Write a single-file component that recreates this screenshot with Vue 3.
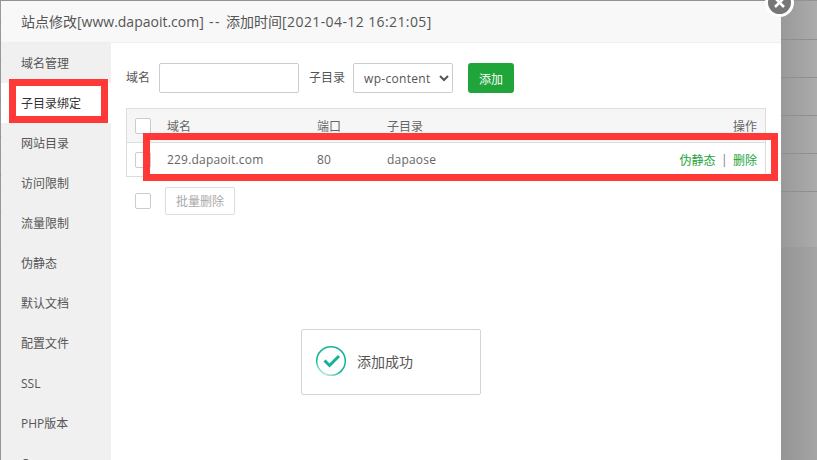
<script setup>
const navItems = ['域名管理', '子目录绑定', '网站目录', '访问限制', '流量限制', '伪静态', '默认文档', '配置文件', 'SSL', 'PHP版本', 'Composer']
const bgRows = [1, 2, 3, 4, 5, 6]
</script>

<template>
  <div class="page">
    <div class="backdrop">
      <div v-for="r in bgRows" :key="r" class="bg-row"></div>
    </div>

    <div class="modal">
      <div class="title">站点修改[www.dapaoit.com]<span class="dash"> -- </span>添加时间<span class="stamp">[2021-04-12 16:21:05]</span></div>
      <div class="body">
        <ul class="nav">
          <li v-for="(n, i) in navItems" :key="n" :class="{ active: i === 1 }">{{ n }}</li>
        </ul>
        <div class="content">
          <div class="toolbar">
            <label class="lbl">域名</label>
            <input class="ipt" type="text" />
            <label class="lbl lbl2">子目录</label>
            <select class="sel"><option>wp-content</option></select>
            <button class="add">添加</button>
          </div>
          <div class="table">
            <div class="tr th">
              <div class="c-check"><span class="box"></span></div>
              <div class="c-domain">域名</div>
              <div class="c-port">端口</div>
              <div class="c-dir">子目录</div>
              <div class="c-op">操作</div>
            </div>
            <div class="tr">
              <div class="c-check"><span class="box"></span></div>
              <div class="c-domain latin">229.dapaoit.com</div>
              <div class="c-port latin">80</div>
              <div class="c-dir latin">dapaose</div>
              <div class="c-op"><a class="lnk">伪静态</a><span class="sep">|</span><a class="lnk">删除</a></div>
            </div>
          </div>
          <div class="batch">
            <span class="box"></span>
            <button class="batch-btn">批量删除</button>
          </div>
        </div>
      </div>
    </div>

    <div class="close">
      <svg width="23" height="23" viewBox="0 0 23 23"><path d="M7 7l9 9M16 7l-9 9" stroke="#fff" stroke-width="2.6" fill="none"/></svg>
    </div>

    <div class="toast">
      <svg class="ok" width="32" height="32" viewBox="0 0 32 32">
        <defs>
          <linearGradient id="ring" x1="0.8" y1="0" x2="0.3" y2="1">
            <stop offset="0" stop-color="#12b398"/>
            <stop offset="0.7" stop-color="#12b398"/>
            <stop offset="1" stop-color="#bfeae2"/>
          </linearGradient>
        </defs>
        <circle cx="16" cy="16" r="14.3" fill="none" stroke="url(#ring)" stroke-width="1.5"/>
        <path d="M9.5 15.5l5 5 9.5-9.5" fill="none" stroke="#12b398" stroke-width="3"/>
      </svg>
      <span>添加成功</span>
    </div>

    <div class="mark mark-nav"></div>
    <div class="mark mark-row"></div>
  </div>
</template>

<style>
html, body { margin: 0; padding: 0; overflow: hidden; }
</style>

<style scoped>
.page {
  position: relative;
  width: 817px;
  height: 460px;
  overflow: hidden;
  background: linear-gradient(90deg, #959595 781px, #a4a4a4 817px);
  font-family: "Open Sans", "Noto Sans CJK SC", sans-serif;
  font-size: 12px;
  color: #666;
}
.backdrop {
  height: 247px;
  box-sizing: border-box;
  border-top: 1px solid #929292;
  background: linear-gradient(90deg, #999 781px, #9b9b9b 785px, #acacac 817px);
}
.bg-row {
  height: 37px;
  border-bottom: 1px solid #8f8f8f;
  position: relative;
}
.bg-row:first-child { height: 38px; }
.bg-row:last-child { height: 55px; border-bottom: 0; }
.bg-row::before {
  content: "";
  position: absolute;
  left: 0;
  top: 20px;
  width: 1px;
  height: 2px;
  background: #5f9fb8;
}
.modal {
  position: absolute;
  left: 1px;
  top: 1px;
  width: 780px;
  height: 459px;
  background: #fff;
  display: flex;
  flex-direction: column;
}
.title {
  height: 41px;
  line-height: 41px;
  padding-left: 20px;
  background: #f8f8f8;
  border-bottom: 1px solid #eee;
  font-size: 14px;
  color: #555;
  white-space: pre;
}
.dash { letter-spacing: 1.5px; }
.stamp { letter-spacing: 0.4px; }
.body { flex: 1; display: flex; min-height: 0; }
.nav {
  width: 110px;
  margin: 0;
  padding: 0;
  list-style: none;
  background: #f0f0f0;
  overflow: hidden;
}
.nav li {
  height: 40px;
  line-height: 42px;
  padding-left: 20px;
  color: #555;
}
.nav li.active { background: #fff; color: #333; }
.content { flex: 1; padding: 20px 15px 0; }
.toolbar { display: flex; align-items: center; height: 30px; }
.lbl { color: #555; margin-right: 9px; line-height: 32px; }
.lbl2 { margin-left: 10px; margin-right: 8px; }
.ipt {
  width: 140px;
  height: 30px;
  box-sizing: border-box;
  border: 1px solid #ccc;
  border-radius: 2px;
  background: #fff;
  padding: 0;
}
.sel {
  width: 100px;
  height: 30px;
  box-sizing: border-box;
  border: 1px solid #ccc;
  border-radius: 2px;
  background: #fff;
  color: #555;
  font: inherit;
  letter-spacing: 0.3px;
  padding-left: 6px;
}
.add {
  width: 46px;
  height: 30px;
  margin-left: 15px;
  border: 0;
  border-radius: 3px;
  background: #20a53a;
  color: #fff;
  font: inherit;
  padding: 1px 0 0;
}
.table {
  margin-top: 15px;
  width: 640px;
  box-sizing: border-box;
  border: 1px solid #ddd;
}
.tr { display: flex; align-items: center; height: 33px; }
.th {
  background: #f6f6f6;
  border-bottom: 1px solid #ddd;
  padding-top: 1px;
  box-sizing: content-box;
  height: 32px;
}
.c-check { width: 40px; display: flex; padding-left: 8px; box-sizing: border-box; }
.box {
  display: block;
  width: 16px;
  height: 16px;
  box-sizing: border-box;
  border: 1px solid #ccc;
  border-radius: 2px;
  background: #fff;
}
.c-domain { width: 150px; }
.c-port { width: 70px; }
.c-dir { flex: 1; }
.latin { letter-spacing: 0.2px; }
.c-op { padding-right: 8px; display: flex; align-items: center; }
.lnk { color: #20a53a; }
.sep { margin: 0 5.5px; color: #777; }
.batch { display: flex; align-items: center; margin-top: 10px; padding-left: 9px; }
.batch-btn {
  width: 70px;
  height: 28px;
  margin-left: 14px;
  border: 1px solid #ddd;
  border-radius: 2px;
  background: #fff;
  color: #aaa;
  font: inherit;
  padding: 0;
}
.close {
  position: absolute;
  left: 765px;
  top: -12px;
  width: 23px;
  height: 23px;
  border: 3px solid #fff;
  border-radius: 50%;
  background: #777;
}
.close svg { display: block; }
.toast {
  position: absolute;
  left: 301px;
  top: 329px;
  width: 180px;
  height: 66px;
  box-sizing: border-box;
  border: 1px solid #d4d4d4;
  border-radius: 2px;
  background: #fff;
  display: flex;
  align-items: center;
  padding: 0 0 2px 13px;
  font-size: 14px;
  color: #555;
}
.ok { margin-right: 10px; }
.mark {
  position: absolute;
  box-sizing: border-box;
  border: 7px solid #ff3838;
}
.mark-nav { left: 9px; top: 79px; width: 99px; height: 44px; }
.mark-row { left: 143px; top: 133px; width: 635px; height: 48px; }
</style>
